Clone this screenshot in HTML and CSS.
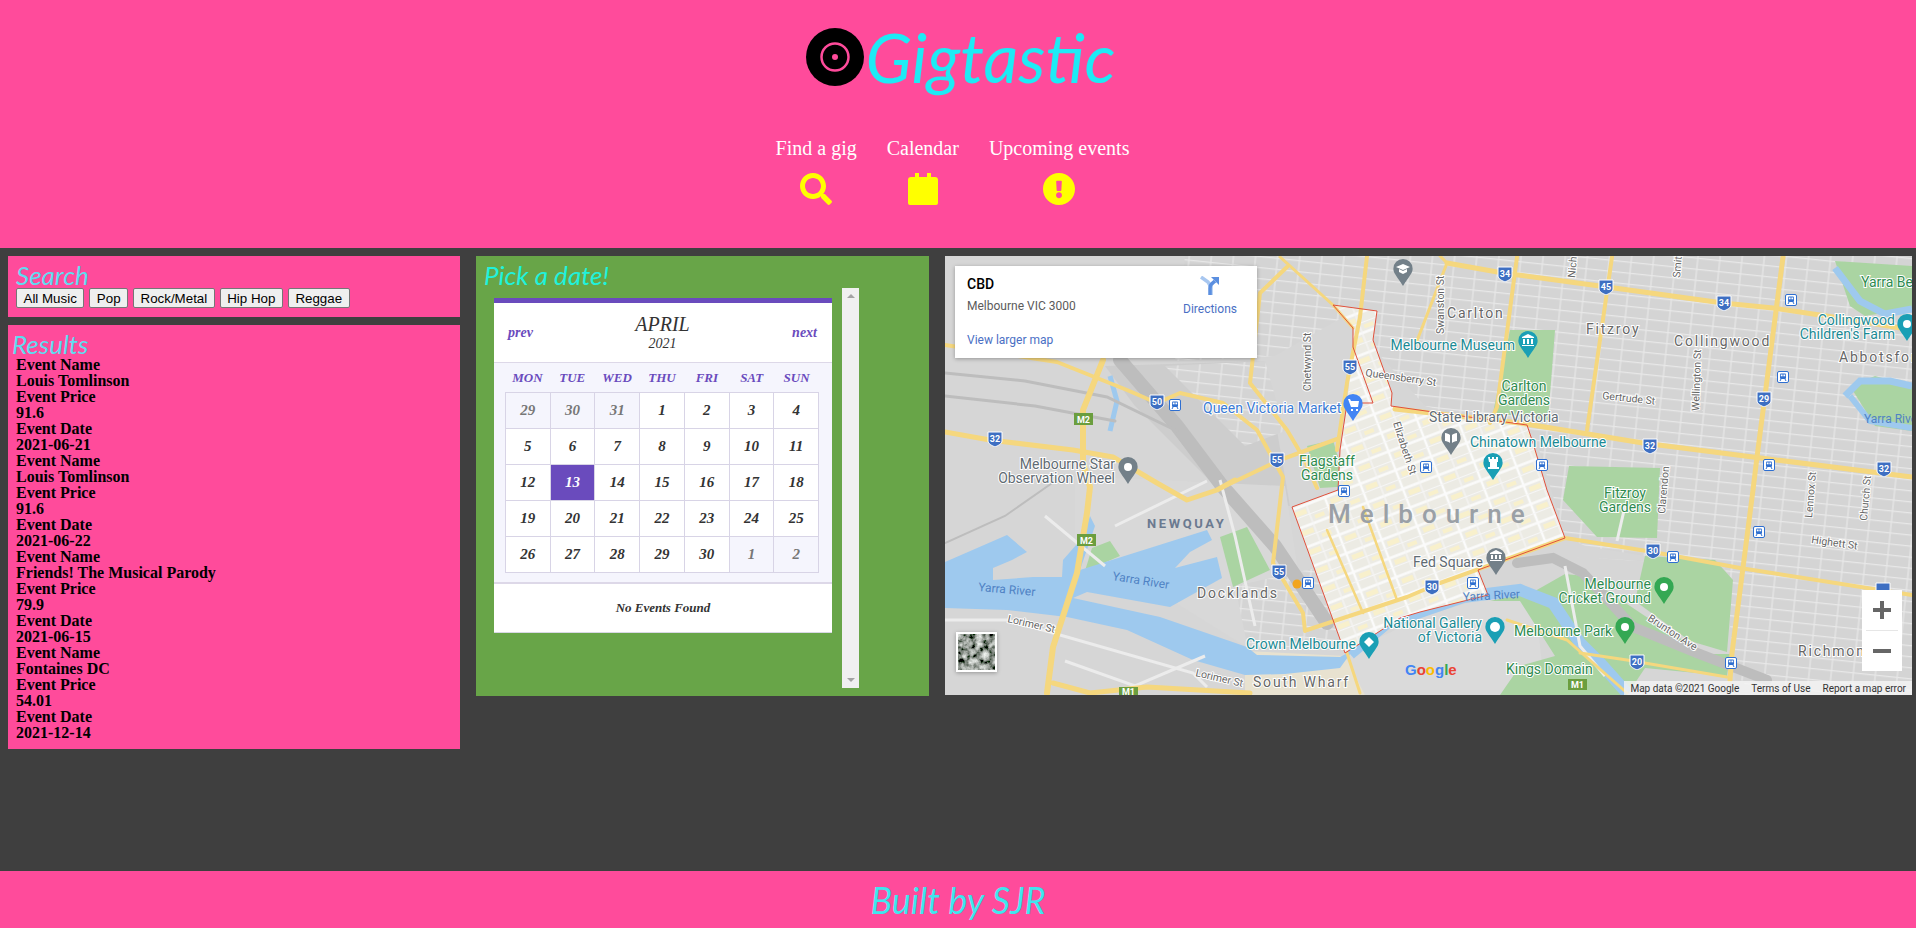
FILE: index.html
```
<!DOCTYPE html>
<html>
  <head>
    <meta charset="utf-8">
    <title>Gigtastic</title>
    <link rel="stylesheet" href="styles.css">
  </head>
  <body>
    <header class="top">
      <div class="brand">
        <svg class="disc" viewBox="0 0 58 58"><circle cx="29" cy="29" r="29" fill="#000"/><circle cx="29" cy="29" r="13.5" fill="none" stroke="#ff4b9b" stroke-width="2.5"/><circle cx="29" cy="29" r="3" fill="#ff4b9b"/></svg>
        <h1>Gigtastic</h1>
      </div>
      <nav class="nav">
        <a class="nav-item"><span>Find a gig</span>
          <svg class="nav-icon" viewBox="0 0 512 512"><path d="M505 442.7L405.3 343c-4.5-4.5-10.6-7-17-7H372c27.6-35.3 44-79.7 44-128C416 93.1 322.9 0 208 0S0 93.1 0 208s93.1 208 208 208c48.3 0 92.7-16.4 128-44v16.3c0 6.4 2.5 12.5 7 17l99.7 99.7c9.4 9.4 24.6 9.4 33.9 0l28.3-28.3c9.4-9.4 9.4-24.6.1-34zM208 336c-70.7 0-128-57.2-128-128 0-70.7 57.2-128 128-128 70.7 0 128 57.2 128 128 0 70.7-57.2 128-128 128z"/></svg>
        </a>
        <a class="nav-item"><span>Calendar</span>
          <svg class="nav-icon" viewBox="0 0 30 32"><path d="M7 0h4v4h8V0h4v4h4a3 3 0 0 1 3 3v23a2 2 0 0 1-2 2H2a2 2 0 0 1-2-2V7a3 3 0 0 1 3-3h4z"/></svg>
        </a>
        <a class="nav-item"><span>Upcoming events</span>
          <svg class="nav-icon" viewBox="8 8 496 496"><path d="M504 256c0 136.997-111.043 248-248 248S8 392.997 8 256C8 119.083 119.043 8 256 8s248 111.083 248 248zm-248 50c-25.405 0-46 20.595-46 46s20.595 46 46 46 46-20.595 46-46-20.595-46-46-46zm-43.673-165.346l7.418 136c.347 6.364 5.609 11.346 11.982 11.346h48.546c6.373 0 11.635-4.982 11.982-11.346l7.418-136c.375-6.874-5.098-12.654-11.982-12.654h-63.383c-6.884 0-12.356 5.78-11.981 12.654z"/></svg>
        </a>
      </nav>
    </header>

    <main class="content">
      <div class="left-col">
        <section class="panel search">
          <h2>Search</h2>
          <div class="genres">
            <button>All Music</button>
            <button>Pop</button>
            <button>Rock/Metal</button>
            <button>Hip Hop</button>
            <button>Reggae</button>
          </div>
        </section>
        <section class="panel results">
          <h2>Results</h2>
          <div class="result-list">
            <div>Event Name</div><div>Louis Tomlinson</div><div>Event Price</div><div>91.6</div><div>Event Date</div><div>2021-06-21</div>
            <div>Event Name</div><div>Louis Tomlinson</div><div>Event Price</div><div>91.6</div><div>Event Date</div><div>2021-06-22</div>
            <div>Event Name</div><div>Friends! The Musical Parody</div><div>Event Price</div><div>79.9</div><div>Event Date</div><div>2021-06-15</div>
            <div>Event Name</div><div>Fontaines DC</div><div>Event Price</div><div>54.01</div><div>Event Date</div><div>2021-12-14</div>
          </div>
        </section>
      </div>

      <section class="date-panel">
        <h2>Pick a date!</h2>
        <div class="cal-row">
          <div class="calendar">
            <div class="cal-head">
              <a>prev</a>
              <div class="cal-title"><div class="month">APRIL</div><div class="year">2021</div></div>
              <a>next</a>
            </div>
            <div class="cal-body">
              <div class="weekdays"><span>MON</span><span>TUE</span><span>WED</span><span>THU</span><span>FRI</span><span>SAT</span><span>SUN</span></div>
              <div class="days">
                <span class="other">29</span><span class="other">30</span><span class="other">31</span><span>1</span><span>2</span><span>3</span><span>4</span>
                <span>5</span><span>6</span><span>7</span><span>8</span><span>9</span><span>10</span><span>11</span>
                <span>12</span><span class="today">13</span><span>14</span><span>15</span><span>16</span><span>17</span><span>18</span>
                <span>19</span><span>20</span><span>21</span><span>22</span><span>23</span><span>24</span><span>25</span>
                <span>26</span><span>27</span><span>28</span><span>29</span><span>30</span><span class="other">1</span><span class="other">2</span>
              </div>
            </div>
            <div class="cal-foot">No Events Found</div>
          </div>
          <div class="scrollbar"><i class="arrow-up"></i><i class="arrow-down"></i></div>
        </div>
      </section>

      <section class="map">
        <svg class="map-art" viewBox="0 0 967 439" width="967" height="439">
          <defs>
            <pattern id="suburb" width="22" height="11" patternUnits="userSpaceOnUse" patternTransform="rotate(6)">
              <rect width="22" height="11" fill="#d4d4d4"/>
              <path d="M0 .6H22M1 0V11" stroke="#e8e8e8" stroke-width="1.2"/>
            </pattern>
            <pattern id="cbd" width="38" height="20" patternUnits="userSpaceOnUse" patternTransform="rotate(-21)">
              <rect width="38" height="20" fill="#ecebe4"/>
              <rect x="6" y="5" width="12" height="5" fill="#f8f0cc"/>
              <rect x="24" y="14" width="10" height="4" fill="#f8f0cc"/>
              <path d="M0 1.5H38M2 0V20" stroke="#fbfbfb" stroke-width="2.500"/>
              <path d="M0 11.500H38M20 0V20" stroke="#f6f6f6" stroke-width="1.200"/>
            </pattern>
            <filter id="aerial" x="0" y="0" width="100%" height="100%">
              <feTurbulence type="fractalNoise" baseFrequency="0.16" numOctaves="4" seed="4"/>
              <feColorMatrix type="matrix" values="1.5 0 0 0 -0.42  1.5 0 0 0 -0.39  1.5 0 0 0 -0.42  0 0 0 0 1"/>
            </filter>
            <symbol id="shield" viewBox="0 0 16 16"><path d="M1 1h14v9c0 3-4 4.500-7 6-3-1.500-7-3-7-6z" fill="#3e6fc2" stroke="#fff" stroke-width="1"/></symbol>
            <symbol id="train" viewBox="0 0 12 12"><rect x=".5" y=".5" width="11" height="11" rx="1.500" fill="#fff" stroke="#2f6fd0"/><rect x="3" y="2.500" width="6" height="5.500" rx="1" fill="#2f6fd0"/><rect x="3.800" y="3.500" width="1.800" height="1.800" fill="#fff"/><rect x="6.400" y="3.500" width="1.800" height="1.800" fill="#fff"/><path d="M4 8l-1 2M8 8l1 2" stroke="#2f6fd0"/></symbol>
            <symbol id="pin" viewBox="0 0 20 28"><path d="M10 0a10 10 0 0 1 10 10c0 5-4 8-10 18C4 18 0 15 0 10A10 10 0 0 1 10 0z"/></symbol>
          </defs>

          <rect width="967" height="439" fill="#d6d6d6"/>
          <!-- street grids -->
          <polygon points="240,0 967,0 967,439 800,439 790,310 700,300 640,290 620,280 590,180 480,150 400,60 330,100 230,105" fill="url(#suburb)"/>
          <polygon points="610,300 967,320 967,439 790,424 780,310" fill="url(#suburb)"/>
          <polygon points="160,110 320,105 345,250 280,240 190,150" fill="#cdcdcd"/>
          <polygon points="220,110 320,105 340,175 300,190" fill="url(#suburb)"/>
          <polygon points="130,220 340,230 360,360 300,390 220,340 130,300" fill="#d8d8d8"/>
          <polygon points="290,330 380,310 395,395 302,388" fill="url(#suburb)"/>
          <polygon points="395,400 480,360 545,340 590,340 600,439 420,439" fill="#dadada"/>
          <polygon points="300,395 400,400 420,439 300,439" fill="#e8e2d0"/>
          <!-- parks -->
          <g fill="#aad4a2">
            <polygon points="565,74 610,74 603,164 548,157"/>
            <polygon points="362,190 388,184 392,198 408,230 375,232"/>
            <polygon points="275,281 302,271 325,314 288,331"/>
            <polygon points="618,244 624,210 715,212 712,282 652,281"/>
            <polygon points="545,345 590,335 620,318 640,320 700,360 760,398 785,398 782,420 700,412 682,439 555,439 575,410 610,400 575,345"/>
            <polygon points="700,300 770,304 788,324 782,396 745,385 690,345"/>
            <polygon points="890,5 967,10 967,52 920,60 905,50"/>
            <polygon points="905,130 930,120 967,130 967,175 930,170"/>
            <polygon points="147,292 165,285 175,300 140,315"/>
          </g>
          <!-- water -->
          <g fill="#9ec9ee">
            <polygon points="0,306 62,279 82,296 67,304 48,312 48,324 88,321 117,321 118,304 138,281 145,260 150,270 135,314 262,274 267,284 245,296 230,312 272,301 277,322 225,351 142,336 128,342 215,361 302,391 312,399 395,401 408,394 395,412 340,418 300,419 248,404 182,374 122,361 62,354 0,352"/>
          </g>
          <g fill="none" stroke="#9ec9ee">
            <polyline stroke-width="12" points="405,398 442,367 475,356 518,341 575,334 608,347 635,387 655,407 682,437"/>
            <polyline stroke-width="5" points="165,120 172,145 165,175"/>
            <polyline stroke-width="7" points="890,12 915,45 940,58 967,53"/>
            <polyline stroke-width="7" points="900,140 915,125 945,125 967,130"/>
            <polyline stroke-width="6" points="905,140 925,165 967,172"/>
          </g>
          <!-- railway and minor roads -->
          <g fill="none" stroke="#bdbdbd" stroke-linecap="round">
            <polyline stroke-width="14" points="175,104 232,170 278,231 330,290 382,367"/>
            <polyline stroke-width="3" points="0,117 80,125 162,141 232,175"/>
            <polyline stroke-width="3" points="0,140 90,150 170,165"/>
            <polyline stroke-width="10" points="572,307 608,302 638,317 688,371 752,397 822,424"/>
            <polyline stroke-width="2" points="0,287 60,260 110,225"/>
          </g>
          <g fill="none" stroke="#ececec" stroke-width="3">
            <polyline points="0,364 62,364 108,377 248,417 262,431"/>
            <polyline points="100,260 160,310"/>
            <polyline points="275,224 290,280 310,370"/>
            <polyline points="170,270 262,225"/>
            <polyline points="120,405 190,430 260,400"/>
            <polyline points="680,250 672,285"/>
            <polyline points="620,310 635,390 660,420"/>
          </g>
          <!-- city centre -->
          <polygon points="388,49 432,55 428,84 447,137 446,150 495,157 582,169 588,187 602,234 620,282 533,314 543,339 475,356 455,362 432,377 400,397 347,251 393,234 395,194 402,147 408,91 408,72" fill="url(#cbd)"/>
          <!-- highways -->
          <g fill="none" stroke="#f5d77e" stroke-linejoin="round" stroke-linecap="round">
            <polyline stroke-width="6" points="158,104 138,154 138,207 145,231 142,257 132,317 108,391 102,437"/>
            <polyline stroke-width="5" points="0,176 45,184 128,194 168,201 212,227 242,244 272,234 290,224"/>
            <polyline stroke-width="4" points="0,89 112,106 182,134 212,147 235,137 278,147 312,174 338,221 328,307 358,357 360,375"/>
            <polyline stroke-width="4" points="422,0 415,61 402,127 392,194"/>
            <polyline stroke-width="3" points="335,1 388,49 408,72"/>
            <polyline stroke-width="4" points="342,11 315,37 305,127 342,174 358,201 372,232"/>
            <polyline stroke-width="4" points="278,231 335,204 392,183"/>
            <polyline stroke-width="4" points="362,374 462,341 495,327 620,282 708,296 795,312 967,339"/>
            <polyline stroke-width="5" points="450,153 575,167 698,187 808,201 967,221"/>
            <polyline stroke-width="5" points="502,7 558,17 662,31 778,47 828,52 908,64 967,74"/>
            <polyline stroke-width="4" points="572,1 552,151 545,167"/>
            <polyline stroke-width="4" points="667,1 642,174"/>
            <polyline stroke-width="5" points="838,1 812,201 808,234 787,397 785,424"/>
            <polyline stroke-width="3" points="635,397 682,404 782,421"/>
            <polyline stroke-width="3" points="562,364 622,384 682,437"/>
            <polyline stroke-width="5" points="108,427 145,437 202,431 305,437"/>
            <polyline stroke-width="2.500" points="382,274 418,357"/>
            <polyline stroke-width="2.500" points="418,251 452,344"/>
            <polyline stroke-width="3" points="402,397 415,437"/>
            <polyline stroke-width="3" points="495,0 502,7 470,90"/>
          </g>
          <!-- boundary -->
          <polygon points="388,49 432,55 428,84 447,137 446,150 495,157 582,169 588,187 602,234 620,282 533,314 543,339 475,356 455,362 432,377 400,397 347,251 393,234 395,194 402,147 428,147 408,91 408,72" fill="none" stroke="#e0503c" stroke-width="1"/>

          <!-- icons -->
          <g fill="#738089">
            <use href="#pin" x="448" y="3" width="20" height="27"/>
            <use href="#pin" x="173" y="201" width="20" height="27"/>
            <use href="#pin" x="496" y="172" width="20" height="27"/>
            <use href="#pin" x="541" y="292" width="20" height="27"/>
          </g>
          <g fill="#1a9fb5">
            <use href="#pin" x="573" y="75" width="20" height="27"/>
            <use href="#pin" x="538" y="197" width="20" height="27"/>
            <use href="#pin" x="952" y="58" width="20" height="27"/>
            <use href="#pin" x="540" y="361" width="20" height="27"/>
            <use href="#pin" x="414" y="376" width="20" height="27"/>
          </g>
          <use href="#pin" x="398" y="138" width="20" height="27" fill="#4285f4"/>
          <g fill="#34a853">
            <use href="#pin" x="709" y="321" width="20" height="27"/>
            <use href="#pin" x="670" y="361" width="20" height="27"/>
          </g>
          <!-- pin glyphs -->
          <g fill="#fff">
            <path d="M458 8l7 3-7 3-7-3zM454 13v3l4 2 4-2v-3l-4 2z"/>
            <circle cx="183" cy="211" r="4"/>
            <path d="M500 177c2 0 4 1 5 2v8c-1-1-3-2-5-2zM512 177c-2 0-4 1-5 2v8c1-1 3-2 5-2z"/>
            <path d="M545 297l6-3 6 3v1h-12zM546 299h2v4h-2zM550 299h2v4h-2zM554 299h2v4h-2zM545 304h12v1h-12z"/>
            <path d="M577 81l6-3 6 3v1h-12zM578 83h2v5h-2zM582 83h2v5h-2zM586 83h2v5h-2zM577 89h12v1h-12z"/>
            <path d="M543 201h2v2h2v-2h2v2h2v-2h2v5h-1v5h2v2h-11v-2h2v-5h-1z"/>
            <circle cx="962" cy="68" r="4"/>
            <circle cx="550" cy="371" r="5"/>
            <path d="M419 386l5-5 5 5-5 5z"/>
            <path d="M403 143h2l1 2h8l-1 6h-7zM406 153h2v2h-2zM411 153h2v2h-2z"/>
            <circle cx="719" cy="331" r="4"/>
            <circle cx="680" cy="371" r="4"/>
          </g>
          <circle cx="352" cy="328" r="4.500" fill="#f2a51e"/>
          <g>
            <use href="#train" x="224" y="143" width="12" height="12"/>
            <use href="#train" x="475" y="205" width="12" height="12"/>
            <use href="#train" x="840" y="38" width="12" height="12"/>
            <use href="#train" x="832" y="115" width="12" height="12"/>
            <use href="#train" x="818" y="203" width="12" height="12"/>
            <use href="#train" x="591" y="203" width="12" height="12"/>
            <use href="#train" x="393" y="229" width="12" height="12"/>
            <use href="#train" x="357" y="321" width="12" height="12"/>
            <use href="#train" x="522" y="321" width="12" height="12"/>
            <use href="#train" x="722" y="295" width="12" height="12"/>
            <use href="#train" x="808" y="270" width="12" height="12"/>
            <use href="#train" x="780" y="401" width="12" height="12"/>
          </g>
          <g>
            <use href="#shield" x="204" y="138" width="16" height="16"/>
            <use href="#shield" x="397" y="103" width="16" height="16"/>
            <use href="#shield" x="324" y="196" width="16" height="16"/>
            <use href="#shield" x="42" y="175" width="16" height="16"/>
            <use href="#shield" x="552" y="10" width="16" height="16"/>
            <use href="#shield" x="653" y="23" width="16" height="16"/>
            <use href="#shield" x="771" y="39" width="16" height="16"/>
            <use href="#shield" x="811" y="135" width="16" height="16"/>
            <use href="#shield" x="697" y="182" width="16" height="16"/>
            <use href="#shield" x="931" y="205" width="16" height="16"/>
            <use href="#shield" x="326" y="308" width="16" height="16"/>
            <use href="#shield" x="479" y="323" width="16" height="16"/>
            <use href="#shield" x="700" y="287" width="16" height="16"/>
            <use href="#shield" x="684" y="398" width="16" height="16"/>
            <use href="#shield" x="930" y="326" width="16" height="16"/>
          </g>
          <g class="shield-txt">
            <text x="212" y="149">50</text><text x="405" y="114">55</text><text x="332" y="207">55</text><text x="50" y="186">32</text>
            <text x="560" y="21">34</text><text x="661" y="34">45</text><text x="779" y="50">34</text><text x="819" y="146">29</text>
            <text x="705" y="193">32</text><text x="939" y="216">32</text><text x="334" y="319">55</text><text x="487" y="334">30</text>
            <text x="708" y="298">30</text><text x="692" y="409">20</text>
          </g>
          <g class="green-sign">
            <rect x="129" y="157" width="19" height="12"/><rect x="132" y="278" width="19" height="12"/><rect x="174" y="431" width="19" height="8"/><rect x="623" y="423" width="19" height="11"/>
          </g>
          <g class="sign-txt">
            <text x="138.500" y="167">M2</text><text x="141.500" y="288">M2</text><text x="183.500" y="439">M1</text><text x="632.500" y="432">M1</text>
          </g>

          <!-- labels -->
          <text class="lbl-big" x="383" y="267">Melbourne</text>
          <g class="lbl-blue">
            <text x="258" y="157">Queen Victoria Market</text>
          </g>
          <g class="lbl-gray">
            <text x="170" y="213" text-anchor="end">Melbourne Star</text>
            <text x="170" y="227" text-anchor="end">Observation Wheel</text>
            <text x="484" y="166">State Library Victoria</text>
            <text x="538" y="311" text-anchor="end">Fed Square</text>
          </g>
          <g class="lbl-green">
            <text x="382" y="210" text-anchor="middle">Flagstaff</text>
            <text x="382" y="224" text-anchor="middle">Gardens</text>
            <text x="680" y="242" text-anchor="middle">Fitzroy</text>
            <text x="680" y="256" text-anchor="middle">Gardens</text>
            <text x="579" y="135" text-anchor="middle">Carlton</text>
            <text x="579" y="149" text-anchor="middle">Gardens</text>
            <text x="706" y="333" text-anchor="end">Melbourne</text>
            <text x="706" y="347" text-anchor="end">Cricket Ground</text>
            <text x="569" y="380">Melbourne Park</text>
            <text x="561" y="418">Kings Domain</text>
            <text x="916" y="31">Yarra Bend</text>
          </g>
          <g class="lbl-teal">
            <text x="301" y="393">Crown Melbourne</text>
            <text x="537" y="372" text-anchor="end">National Gallery</text>
            <text x="537" y="386" text-anchor="end">of Victoria</text>
            <text x="525" y="191">Chinatown Melbourne</text>
            <text x="570" y="94" text-anchor="end">Melbourne Museum</text>
            <text x="950" y="69" text-anchor="end">Collingwood</text>
            <text x="950" y="83" text-anchor="end">Children's Farm</text>
          </g>
          <g class="lbl-area">
            <text x="252" y="342">Docklands</text>
            <text x="308" y="431">South Wharf</text>
            <text x="853" y="400">Richmond</text>
            <text x="502" y="62">Carlton</text>
            <text x="641" y="78">Fitzroy</text>
            <text x="729" y="90">Collingwood</text>
            <text x="894" y="106">Abbotsford</text>
          </g>
          <text class="lbl-quay" x="202" y="272">NEWQUAY</text>
          <g class="lbl-water">
            <text transform="translate(33,335) rotate(5)">Yarra River</text>
            <text transform="translate(167,324) rotate(9)">Yarra River</text>
            <text transform="translate(518,345) rotate(-3)">Yarra River</text>
            <text x="919" y="167">Yarra River</text>
          </g>
          <g class="lbl-street">
            <text transform="translate(366,135) rotate(-90)">Chetwynd St</text>
            <text transform="translate(448,167) rotate(72)">Elizabeth St</text>
            <text transform="translate(420,120) rotate(8)">Queensberry St</text>
            <text transform="translate(499,78) rotate(-90)">Swanston St</text>
            <text transform="translate(657,143) rotate(6)">Gertrude St</text>
            <text transform="translate(754,155) rotate(-88)">Wellington St</text>
            <text transform="translate(630,22) rotate(-85)">Nicholson</text>
            <text transform="translate(735,22) rotate(-85)">Smith</text>
            <text transform="translate(867,262) rotate(-85)">Lennox St</text>
            <text transform="translate(922,265) rotate(-85)">Church St</text>
            <text transform="translate(866,287) rotate(8)">Highett St</text>
            <text transform="translate(702,364) rotate(33)">Brunton Ave</text>
            <text transform="translate(62,366) rotate(13)">Lorimer St</text>
            <text transform="translate(250,420) rotate(13)">Lorimer St</text>
            <text transform="translate(720,258) rotate(-85)">Clarendon</text>
          </g>
          <text class="g-logo" x="460" y="419"><tspan fill="#4285f4">G</tspan><tspan fill="#ea4335">o</tspan><tspan fill="#fbbc05">o</tspan><tspan fill="#4285f4">g</tspan><tspan fill="#34a853">l</tspan><tspan fill="#ea4335">e</tspan></text>
        </svg>

        <div class="place-card">
          <div class="place-info">
            <div class="place-name">CBD</div>
            <div class="place-addr">Melbourne VIC 3000</div>
            <a class="place-link">View larger map</a>
          </div>
          <a class="directions">
            <svg viewBox="0 0 20 20" width="20" height="20"><path d="M1 1l7 5 3 5v8" fill="none" stroke="#a8c7f0" stroke-width="3.500"/><path d="M10 19v-7c0-4 3-5 5-7" fill="none" stroke="#5b8fe0" stroke-width="3.500"/><path d="M11 1h8v8z" fill="#5b8fe0"/></svg>
            <span>Directions</span>
          </a>
        </div>
        <div class="sat-thumb">
          <svg viewBox="0 0 37 36" width="37" height="36">
            <rect width="37" height="36" filter="url(#aerial)"/>
          </svg>
        </div>
        <div class="zoom-ctl">
          <div class="zoom-btn"><svg viewBox="0 0 18 18" width="18" height="18"><path d="M0 9h18M9 0v18" stroke="#666" stroke-width="4"/></svg></div>
          <div class="zoom-sep"></div>
          <div class="zoom-btn"><svg viewBox="0 0 18 18" width="18" height="18"><path d="M0 9h18" stroke="#666" stroke-width="4"/></svg></div>
        </div>
        <div class="attrib"><span>Map data ©2021 Google</span><span>Terms of Use</span><span>Report a map error</span></div>
      </section>
    </main>

    <footer class="bottom">Built by SJR</footer>
  </body>
</html>
```

FILE: styles.css
```
html, body {
  margin: 0;
  padding: 0;
}

body {
  width: 1916px;
  height: 928px;
  display: flex;
  flex-direction: column;
  overflow: hidden;
  background: #3f3f3f;
  font-family: "Liberation Serif", serif;
}

h1, h2 {
  margin: 0;
  font-family: "Lato", sans-serif;
  font-style: italic;
  font-weight: 400;
}

.top {
  height: 248px;
  background: #ff4b9b;
  display: flex;
  flex-direction: column;
  align-items: center;
}

.brand {
  display: flex;
  align-items: center;
  height: 58px;
  margin-top: 28px;
  margin-left: 5px;
}

.disc {
  width: 58px;
  height: 58px;
}

h1 {
  margin-left: 2px;
  font-size: 68px;
  line-height: 58px;
  color: #1debf5;
}

.nav {
  display: flex;
  gap: 30px;
  margin-top: 50px;
  margin-right: 11px;
  color: #fff;
  font-size: 20px;
  line-height: 24px;
}

.nav-item {
  display: flex;
  flex-direction: column;
  align-items: center;
}

.nav-icon {
  width: 32px;
  height: 32px;
  margin-top: 13px;
  fill: #ffff00;
}

.content {
  flex: 1;
  display: grid;
  grid-template-columns: 452px 453px 967px;
  column-gap: 16px;
  align-items: start;
  padding: 8px 4px 0 8px;
}

.left-col {
  display: flex;
  flex-direction: column;
  gap: 8px;
}

.panel {
  background: #ff4b9b;
}

.panel h2 {
  font-size: 26px;
  line-height: 26px;
  color: #5fdcf0;
}

.search {
  height: 61px;
  box-sizing: border-box;
  padding: 6px 8px 0 8px;
}

.genres {
  display: flex;
  gap: 5px;
}

.genres button {
  height: 20px;
  padding: 0 6.5px;
  font-family: "Liberation Sans", sans-serif;
  font-size: 13.333px;
  background: #efefef;
  border: 1px solid #767676;
  border-radius: 2px;
  color: #000;
}

.results {
  height: 424px;
  box-sizing: border-box;
  padding: 6px 8px 0 8px;
}

.results h2 {
  margin-left: -4px;
}

.result-list {
  font-weight: bold;
  font-size: 16px;
  line-height: 16px;
  color: #000;
}

.date-panel {
  height: 440px;
  box-sizing: border-box;
  background: #68a548;
  padding: 6px 8px 0 8px;
}

.date-panel h2 {
  font-size: 26px;
  line-height: 26px;
  color: #1ff2dc;
}

.cal-row {
  display: flex;
  align-items: flex-start;
  gap: 10px;
  margin-left: 10px;
}

.calendar {
  width: 338px;
  margin-top: 10px;
  background: #fff;
  border-top: 5px solid #6a4bbd;
  border-bottom: 1px solid #d8d8e4;
  font-family: "Liberation Serif", serif;
  font-style: italic;
  font-weight: bold;
  color: #333;
}

.cal-head {
  height: 59px;
  display: flex;
  align-items: center;
  justify-content: space-between;
  padding: 0 15px 0 14px;
  font-size: 14px;
  color: #6a4bbd;
  border-bottom: 1px solid #ddd8e8;
}

.cal-title {
  text-align: center;
  color: #333;
}

.month {
  font-size: 20px;
  line-height: 22px;
  font-weight: normal;
}

.year {
  font-size: 14px;
  line-height: 18px;
  font-weight: normal;
}

.cal-body {
  background: #f5f5fd;
  padding: 0 13px 9px 11px;
  border-bottom: 2px solid #ddd8e8;
}

.weekdays {
  height: 29px;
  display: grid;
  grid-template-columns: repeat(7, 1fr);
  align-items: center;
  text-align: center;
  font-size: 13px;
  color: #6a4bbd;
}

.days {
  display: grid;
  grid-template-columns: repeat(7, 1fr);
  grid-auto-rows: 36px;
  border-top: 1px solid #d8d4e6;
  border-left: 1px solid #d8d4e6;
  background: #fff;
  font-size: 15px;
}

.days span {
  display: flex;
  align-items: center;
  justify-content: center;
  border-right: 1px solid #d8d4e6;
  border-bottom: 1px solid #d8d4e6;
}

.days .other {
  background: #f5f5fd;
  color: #777;
}

.days .today {
  background: #6a4bbd;
  color: #fff;
}

.cal-foot {
  height: 48px;
  display: flex;
  align-items: center;
  justify-content: center;
  font-size: 13px;
}

.scrollbar {
  width: 17px;
  height: 400px;
  background: #f0f0f0;
  display: flex;
  flex-direction: column;
  align-items: center;
  justify-content: space-between;
  padding: 6px 0;
  box-sizing: border-box;
}

.arrow-up {
  border: 4px solid transparent;
  border-top: 0;
  border-bottom: 4px solid #a3a3a3;
}

.arrow-down {
  border: 4px solid transparent;
  border-bottom: 0;
  border-top: 4px solid #a3a3a3;
}

.map {
  position: relative;
  width: 967px;
  height: 439px;
  overflow: hidden;
  font-family: "Roboto", sans-serif;
}

.map-art {
  display: block;
}

.map-art text {
  font-family: "Roboto", sans-serif;
}

.shield-txt text {
  font-size: 9px;
  font-weight: 700;
  fill: #fff;
  text-anchor: middle;
}

.green-sign rect {
  fill: #6b9e3f;
}

.sign-txt text {
  font-size: 9px;
  font-weight: 700;
  fill: #fff;
  text-anchor: middle;
}

.map-art .lbl-big {
  font-size: 26px;
  font-weight: 500;
  letter-spacing: 9px;
  fill: #9aa0a6;
}

.lbl-blue text {
  font-size: 14px;
  fill: #3a7bd5;
  stroke: #fff;
  stroke-width: 2px;
  paint-order: stroke;
}

.lbl-gray text {
  font-size: 14px;
  fill: #5f6b73;
  stroke: #fff;
  stroke-width: 2px;
  paint-order: stroke;
}

.lbl-green text {
  font-size: 14px;
  fill: #2e8b4f;
  stroke: #fff;
  stroke-width: 2px;
  paint-order: stroke;
}

.lbl-teal text {
  font-size: 14px;
  fill: #1a8a94;
  stroke: #fff;
  stroke-width: 2px;
  paint-order: stroke;
}

.lbl-area text {
  font-size: 14px;
  letter-spacing: 1.8px;
  fill: #666;
  stroke: #fff;
  stroke-width: 2px;
  paint-order: stroke;
}

.map-art .lbl-quay {
  font-size: 13px;
  font-weight: 700;
  letter-spacing: 2.6px;
  fill: #6b7a90;
}

.lbl-water text {
  font-size: 12px;
  fill: #4f82c4;
}

.lbl-street text {
  font-size: 10.5px;
  fill: #666;
  stroke: #fff;
  stroke-width: 2px;
  paint-order: stroke;
}

.map-art .g-logo {
  font-family: "Liberation Sans", sans-serif;
  font-size: 15px;
  font-weight: bold;
}

.place-card {
  position: absolute;
  left: 10px;
  top: 10px;
  width: 302px;
  height: 92px;
  box-sizing: border-box;
  padding: 10px 12px;
  display: flex;
  justify-content: space-between;
  background: #fff;
  box-shadow: 0 1px 4px rgba(0, 0, 0, 0.3);
  font-size: 12px;
}

.place-name {
  font-size: 14px;
  font-weight: 500;
  line-height: 16px;
  color: #000;
}

.place-addr {
  margin-top: 6px;
  line-height: 16px;
  color: #5b5b5b;
}

.place-link {
  display: block;
  margin-top: 19px;
  line-height: 14px;
  color: #4a6fc4;
}

.directions {
  width: 62px;
  display: flex;
  flex-direction: column;
  align-items: center;
  gap: 6px;
  margin-right: 4px;
  color: #4a6fc4;
}

.sat-thumb {
  position: absolute;
  left: 11px;
  top: 376px;
  height: 36px;
  border: 2px solid #fff;
  box-shadow: 0 1px 4px rgba(0, 0, 0, 0.3);
}

.sat-thumb svg {
  display: block;
}

.zoom-ctl {
  position: absolute;
  left: 917px;
  top: 334px;
  width: 40px;
  height: 81px;
  background: #fff;
  display: flex;
  flex-direction: column;
  align-items: center;
}

.zoom-btn {
  height: 40px;
  display: flex;
  align-items: center;
  justify-content: center;
}

.zoom-sep {
  width: 32px;
  height: 1px;
  background: #e6e6e6;
}

.attrib {
  position: absolute;
  right: 0;
  bottom: 0;
  display: flex;
  gap: 12px;
  height: 14px;
  padding: 0 6px;
  align-items: center;
  background: rgba(245, 245, 245, 0.8);
  font-size: 10px;
  color: #333;
}

.bottom {
  height: 57px;
  background: #ff4b9b;
  display: flex;
  align-items: center;
  justify-content: center;
  font-family: "Lato", sans-serif;
  font-style: italic;
  font-size: 36px;
  color: #3fe6ee;
}
```
